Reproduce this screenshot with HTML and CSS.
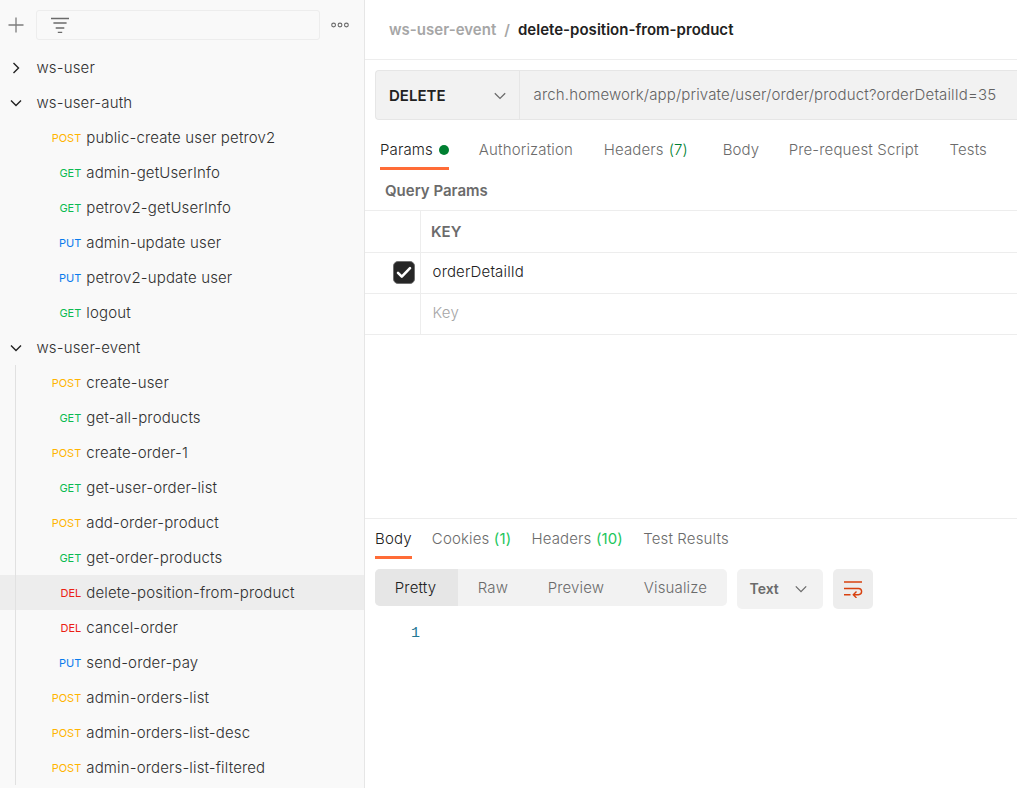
FILE: index.html
```html
<!DOCTYPE html>
<html lang="en">
<head>
<meta charset="utf-8">
<title>delete-position-from-product</title>
<link rel="stylesheet" href="styles.css">
</head>
<body>
<div class="app">
  <aside class="sidebar">
    <div class="toolbar">
      <svg class="plus" width="16" height="16" viewBox="0 0 16 16"><path d="M8 .5v15M.5 8h15"/></svg>
      <div class="filter">
        <svg width="18" height="17" viewBox="0 0 18 17"><path d="M0 1.5h18M2.4 6h13.200M4.700 11h8.600M6.800 15.400h4.400"/></svg>
      </div>
      <svg class="more" width="18" height="6" viewBox="0 0 18 6"><circle cx="2.600" cy="3" r="1.900"/><circle cx="9" cy="3" r="1.900"/><circle cx="15.400" cy="3" r="1.900"/></svg>
    </div>
    <div class="folder"><svg class="arrow" width="12" height="12" viewBox="0 0 12 12"><path d="M3.500 1l5 5-5 5"/></svg>ws-user</div>
    <div class="folder"><svg class="arrow" width="12" height="12" viewBox="0 0 12 12"><path d="M1 3.500l5 5 5-5"/></svg>ws-user-auth</div>
    <div class="requests">
      <div class="request"><span class="method post">POST</span>public-create user petrov2</div>
      <div class="request"><span class="method get">GET</span>admin-getUserInfo</div>
      <div class="request"><span class="method get">GET</span>petrov2-getUserInfo</div>
      <div class="request"><span class="method put">PUT</span>admin-update user</div>
      <div class="request"><span class="method put">PUT</span>petrov2-update user</div>
      <div class="request"><span class="method get">GET</span>logout</div>
    </div>
    <div class="folder"><svg class="arrow" width="12" height="12" viewBox="0 0 12 12"><path d="M1 3.500l5 5 5-5"/></svg>ws-user-event</div>
    <div class="requests guided">
      <div class="request"><span class="method post">POST</span>create-user</div>
      <div class="request"><span class="method get">GET</span>get-all-products</div>
      <div class="request"><span class="method post">POST</span>create-order-1</div>
      <div class="request"><span class="method get">GET</span>get-user-order-list</div>
      <div class="request"><span class="method post">POST</span>add-order-product</div>
      <div class="request"><span class="method get">GET</span>get-order-products</div>
      <div class="request selected"><span class="method del">DEL</span>delete-position-from-product</div>
      <div class="request"><span class="method del">DEL</span>cancel-order</div>
      <div class="request"><span class="method put">PUT</span>send-order-pay</div>
      <div class="request"><span class="method post">POST</span>admin-orders-list</div>
      <div class="request"><span class="method post">POST</span>admin-orders-list-desc</div>
      <div class="request"><span class="method post">POST</span>admin-orders-list-filtered</div>
    </div>
  </aside>

  <main class="main">
    <header class="crumbs"><span class="parent">ws-user-event</span><span class="slash">/</span><span class="current">delete-position-from-product</span></header>

    <div class="urlbar">
      <div class="verb">DELETE<svg width="12" height="12" viewBox="0 0 12 12"><path d="M.8 3.200L6 8.400l5.200-5.200"/></svg></div>
      <div class="url">arch.homework/app/private/user/order/product?orderDetailId=35</div>
    </div>

    <nav class="tabs">
      <div class="tab active t-params">Params<i class="dot"></i></div>
      <div class="tab t-auth">Authorization</div>
      <div class="tab t-headers">Headers <span class="count">(7)</span></div>
      <div class="tab t-body">Body</div>
      <div class="tab t-pre">Pre-request Script</div>
      <div class="tab">Tests</div>
    </nav>

    <h2 class="section-title">Query Params</h2>
    <div class="params">
      <div class="row head"><div class="check"></div><div class="key">KEY</div></div>
      <div class="row"><div class="check"><span class="box"><svg width="16" height="13" viewBox="0 0 16 13"><path d="M2 6.800l3.800 3.800L14 2.200"/></svg></span></div><div class="key">orderDetailId</div></div>
      <div class="row blank"><div class="check"></div><div class="key">Key</div></div>
    </div>

    <section class="response">
      <nav class="res-tabs">
        <div class="res-tab active">Body</div>
        <div class="res-tab">Cookies <span class="count">(1)</span></div>
        <div class="res-tab">Headers <span class="count">(10)</span></div>
        <div class="res-tab">Test Results</div>
      </nav>
      <div class="views">
        <div class="segments">
          <div class="segment on">Pretty</div>
          <div class="segment">Raw</div>
          <div class="segment">Preview</div>
          <div class="segment">Visualize</div>
        </div>
        <div class="format">Text<svg width="12" height="12" viewBox="0 0 12 12"><path d="M.8 3.400L6 8.600l5.200-5.200"/></svg></div>
        <div class="wrap"><svg width="20" height="18" viewBox="0 0 20 18"><path d="M1 2h18M1 8.500h14.500a3.100 3.100 0 0 1 0 6.200h-5M13.500 11.500l-3.200 3.200 3.200 3.200M1 14.700h6.500"/></svg></div>
      </div>
      <div class="code">1</div>
    </section>
  </main>
</div>
</body>
</html>
```
FILE: styles.css
```css
* { box-sizing: border-box; }
body { margin: 0; font: 350 15px/20px Inter, "Liberation Sans", sans-serif; letter-spacing: .145px; color: #212121; background: #fff; }
svg { display: block; flex: none; fill: none; stroke: #6b6b6b; stroke-width: 1.3; }
.app { display: flex; width: 1017px; height: 788px; overflow: hidden; }

.sidebar { flex: none; width: 365px; background: #f9f9f9; border-right: 1px solid #e6e6e6; color: #303030; }
.toolbar { display: flex; align-items: center; height: 50px; padding-left: 8px; }
.plus { stroke: #7c7c7c; }
.filter { display: flex; align-items: center; width: 284px; height: 30px; margin: 0 11px 0 12px; padding-left: 14px; border: 1px solid #ededed; border-radius: 3px; }
.more { stroke-width: 1.1; }
.folder { display: flex; align-items: center; height: 35px; padding: 1px 0 0 10px; gap: 14.5px; }
.arrow { margin-top: -1px; stroke: #212121; stroke-width: 1.4; }
.requests { position: relative; }
.guided::before { content: ""; position: absolute; left: 15px; top: 0; width: 1px; height: 100%; background: #e1e1e1; }
.request { display: flex; align-items: center; height: 35px; padding-top: 1px; }
.selected { background: #ededed; }
.method { width: 81.3px; margin-right: 5px; text-align: right; font-size: 11px; font-weight: 400; letter-spacing: 0; }
.post { color: #ffb400; }
.get { color: #0cbb52; }
.put { color: #097bed; }
.del { color: #eb2013; }

.main { flex: 1; min-width: 0; display: flex; flex-direction: column; }
.crumbs { display: flex; align-items: center; height: 60px; padding-left: 24px; border-bottom: 1px solid #ededed; font-weight: 600; letter-spacing: .02px; }
.parent, .slash { color: #a6a6a6; }
.slash { margin: 0 8px; }
.urlbar { display: flex; height: 50px; margin: 10px 0 0 10px; background: #f2f2f2; border: 1px solid #e6e6e6; border-right: 0; border-radius: 4px 0 0 4px; }
.verb { display: flex; align-items: center; justify-content: space-between; width: 144px; padding: 2px 13px 0 13px; border-right: 1px solid #e6e6e6; font-weight: 600; letter-spacing: 0; }
.url { padding: 14px 0 0 13.6px; color: #626262; white-space: nowrap; }

.tabs { display: flex; height: 50px; padding-left: 15px; color: #6b6b6b; white-space: nowrap; }
.tab { display: flex; gap: 5px; margin-right: 30px; padding-top: 20px; }
.t-params { width: 69px; justify-content: space-between; }
.t-auth { width: 95px; }
.t-headers { width: 84px; }
.t-body { width: 36px; }
.t-pre { width: 131px; }
.tabs .count { color: #007f31; }
.t-headers { margin-right: 35px; }
.active { color: #212121; border-bottom: 3px solid #ff6c37; }
.dot { width: 10px; height: 10px; margin-top: 5px; border-radius: 50%; background: #007f31; }
.section-title { margin: 0; height: 40px; padding: 11px 0 0 20px; font-size: 15px; line-height: 20px; font-weight: 600; letter-spacing: 0; color: #6b6b6b; }
.params { border-top: 1px solid #ededed; }
.row { display: flex; height: 41px; border-bottom: 1px solid #ededed; }
.check { display: flex; align-items: center; justify-content: center; width: 56px; padding-left: 22px; border-right: 1px solid #ededed; }
.key { padding: 9px 0 0 11.6px; }
.head { height: 42px; font-weight: 600; letter-spacing: 0; color: #6b6b6b; }
.head .key { padding: 11px 0 0 10px; }
.blank { color: #a6a6a6; }
.box { display: flex; align-items: center; justify-content: center; width: 22px; height: 23px; margin-bottom: 1px; border: 1px solid #707070; border-radius: 5px; background: #262626; }
.box svg { stroke: #fff; stroke-width: 2.6; stroke-linecap: round; stroke-linejoin: round; }

.response { margin-top: auto; height: 270px; border-top: 1px solid #ededed; }
.res-tabs { display: flex; gap: 20.2px; height: 40px; padding-left: 10px; color: #6b6b6b; }
.res-tab { padding-top: 10px; white-space: nowrap; }
.res-tabs .count { color: #1bc65b; font-weight: 400; }
.views { display: flex; gap: 10px; height: 40px; margin: 10px 0 0 10px; color: #6b6b6b; }
.segments { display: flex; width: 352px; height: 37px; border-radius: 5px; background: #f2f2f2; overflow: hidden; }
.segment { padding: 9px 19.8px 0; }
.on { width: 83px; background: #e6e6e6; color: #212121; }
.format { display: flex; align-items: center; justify-content: space-between; width: 86px; padding: 0 16px 1px 12.500px; border-radius: 5px; background: #f2f2f2; font-size: 14px; font-weight: 600; letter-spacing: 0; }
.wrap { display: flex; align-items: center; justify-content: center; width: 40px; border-radius: 5px; background: #ededed; }
.wrap svg { stroke: #d8410f; stroke-width: 1.4; }
.code { padding: 15px 0 0 46px; font: 15px/20px "Liberation Mono", monospace; color: #237893; }
```
